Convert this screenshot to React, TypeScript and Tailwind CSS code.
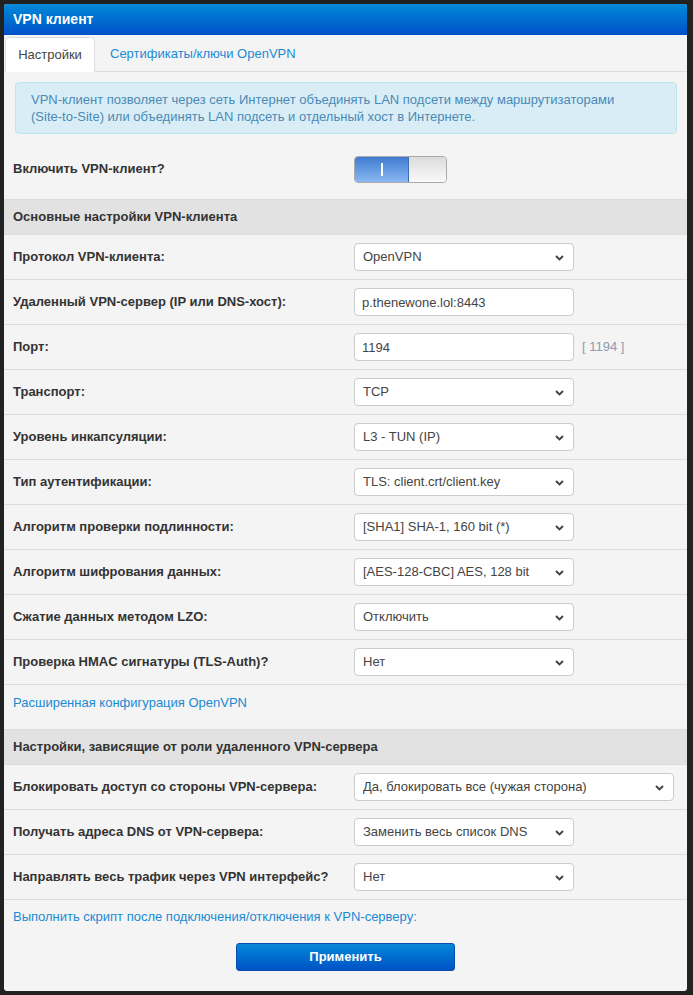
import React from 'react';

type Row =
  | { kind: 'select'; label: string; value: string; wide?: boolean }
  | { kind: 'input'; label: string; value: string; hint?: string };

const mainRows: Row[] = [
  { kind: 'select', label: 'Протокол VPN-клиента:', value: 'OpenVPN' },
  { kind: 'input', label: 'Удаленный VPN-сервер (IP или DNS-хост):', value: 'p.thenewone.lol:8443' },
  { kind: 'input', label: 'Порт:', value: '1194', hint: '[ 1194 ]' },
  { kind: 'select', label: 'Транспорт:', value: 'TCP' },
  { kind: 'select', label: 'Уровень инкапсуляции:', value: 'L3 - TUN (IP)' },
  { kind: 'select', label: 'Тип аутентификации:', value: 'TLS: client.crt/client.key' },
  { kind: 'select', label: 'Алгоритм проверки подлинности:', value: '[SHA1] SHA-1, 160 bit (*)' },
  { kind: 'select', label: 'Алгоритм шифрования данных:', value: '[AES-128-CBC] AES, 128 bit' },
  { kind: 'select', label: 'Сжатие данных методом LZO:', value: 'Отключить' },
  { kind: 'select', label: 'Проверка HMAC сигнатуры (TLS-Auth)?', value: 'Нет' },
];

const roleRows: Row[] = [
  { kind: 'select', label: 'Блокировать доступ со стороны VPN-сервера:', value: 'Да, блокировать все (чужая сторона)', wide: true },
  { kind: 'select', label: 'Получать адреса DNS от VPN-сервера:', value: 'Заменить весь список DNS' },
  { kind: 'select', label: 'Направлять весь трафик через VPN интерфейс?', value: 'Нет' },
];

function Chevron() {
  return (
    <svg width="9" height="6" viewBox="0 0 9 6" className="pointer-events-none absolute right-[10px] top-[12px]">
      <path d="M1 1 L4.5 4.4 L8 1" fill="none" stroke="#444" strokeWidth="2" />
    </svg>
  );
}

function Field({ row }: { row: Row }) {
  if (row.kind === 'input') {
    return (
      <div className="flex items-center">
        <input
          defaultValue={row.value}
          className="h-[28px] w-[220px] rounded-[4px] border border-[#ccc] bg-white px-[7px] text-[13px] text-[#444] outline-none"
        />
        {row.hint && <span className="ml-[8px] text-[13px] text-[#8b9db0]">{row.hint}</span>}
      </div>
    );
  }
  return (
    <div className={`relative ${row.wide ? 'w-[320px]' : 'w-[220px]'}`}>
      <select
        defaultValue={row.value}
        className="h-[28px] w-full appearance-none rounded-[4px] border border-[#ccc] bg-white pl-[8px] text-[13px] text-[#444] outline-none"
      >
        <option>{row.value}</option>
      </select>
      <Chevron />
    </div>
  );
}

function FormRow({ row }: { row: Row }) {
  return (
    <div className="flex h-[45px] items-center border-t border-[#ddd]">
      <div className="w-[350px] pl-[9px] text-[13px] font-bold text-[#333]">{row.label}</div>
      <Field row={row} />
    </div>
  );
}

function SectionHeader({ title }: { title: string }) {
  return (
    <div className="flex h-[35px] items-center border-t border-[#ddd] bg-[#e2e2e2] pl-[9px] text-[13px] font-bold text-[#333]">
      {title}
    </div>
  );
}

export default function App() {
  return (
    <div className="min-h-[995px] bg-[#222] pt-[4px] pl-[4px] font-['Liberation_Sans',Arial,sans-serif]">
      <div className="w-[683px] overflow-hidden rounded-[3px] bg-[#f4f4f4]">
        <div className="flex h-[31px] items-center bg-gradient-to-b from-[#0b8ad8] to-[#0050c8] pl-[9px] text-[14px] font-bold text-white">
          VPN клиент
        </div>

        <div className="flex h-[37px] items-end border-b border-[#ddd] pl-[1px]">
          <div className="-mb-px flex h-[35px] w-[90px] items-center justify-center rounded-t-[4px] border border-b-0 border-[#ddd] bg-white text-[13px] text-[#444]">
            Настройки
          </div>
          <div className="flex h-[35px] items-center pl-[15px] text-[13px] text-[#1a8ad4]">Сертификаты/ключи OpenVPN</div>
        </div>

        <div className="mx-[10px] mt-[10px] ml-[11px] rounded-[4px] border border-[#bce8f1] bg-[#d9edf7] px-[15px] py-[8px] text-[13px] leading-[17px] text-[#4a8ab5]">
          VPN-клиент позволяет через сеть Интернет объединять LAN подсети между маршрутизаторами
          <br />
          (Site-to-Site) или объединять LAN подсеть и отдельный хост в Интернете.
        </div>

        <div className="mt-[5px] flex h-[60px] items-center">
          <div className="w-[350px] pl-[9px] text-[13px] font-bold text-[#333]">Включить VPN-клиент?</div>
          <div className="flex h-[27px] w-[93px] overflow-hidden rounded-[4px] border border-[#a9a9a9]">
            <div className="flex w-[54px] items-center justify-center border-r border-[#3a6fb8] bg-gradient-to-b from-[#3e7bd0] to-[#8ab8f2]">
              <div className="h-[13px] w-[2px] bg-white" />
            </div>
            <div className="flex-1 bg-gradient-to-b from-[#dcdcdc] to-[#fafafa]" />
          </div>
        </div>

        <SectionHeader title="Основные настройки VPN-клиента" />
        {mainRows.map((row) => (
          <FormRow key={row.label} row={row} />
        ))}
        <div className="h-[45px] border-t border-[#ddd] pl-[9px] pt-[8px] text-[13px] text-[#1a8ad4]">
          Расширенная конфигурация OpenVPN
        </div>

        <SectionHeader title="Настройки, зависящие от роли удаленного VPN-сервера" />
        {roleRows.map((row) => (
          <FormRow key={row.label} row={row} />
        ))}
        <div className="flex h-[35px] items-center border-t border-[#ddd] pl-[9px] text-[13px] text-[#1a8ad4]">
          Выполнить скрипт после подключения/отключения к VPN-серверу:
        </div>

        <div className="flex justify-center pb-[20px] pt-[9px]">
          <button className="h-[28px] w-[219px] rounded-[3px] border border-[#0a4fb0] bg-gradient-to-b from-[#0a88d6] to-[#0052c6] text-[13px] font-bold text-white">
            Применить
          </button>
        </div>
      </div>
    </div>
  );
}
